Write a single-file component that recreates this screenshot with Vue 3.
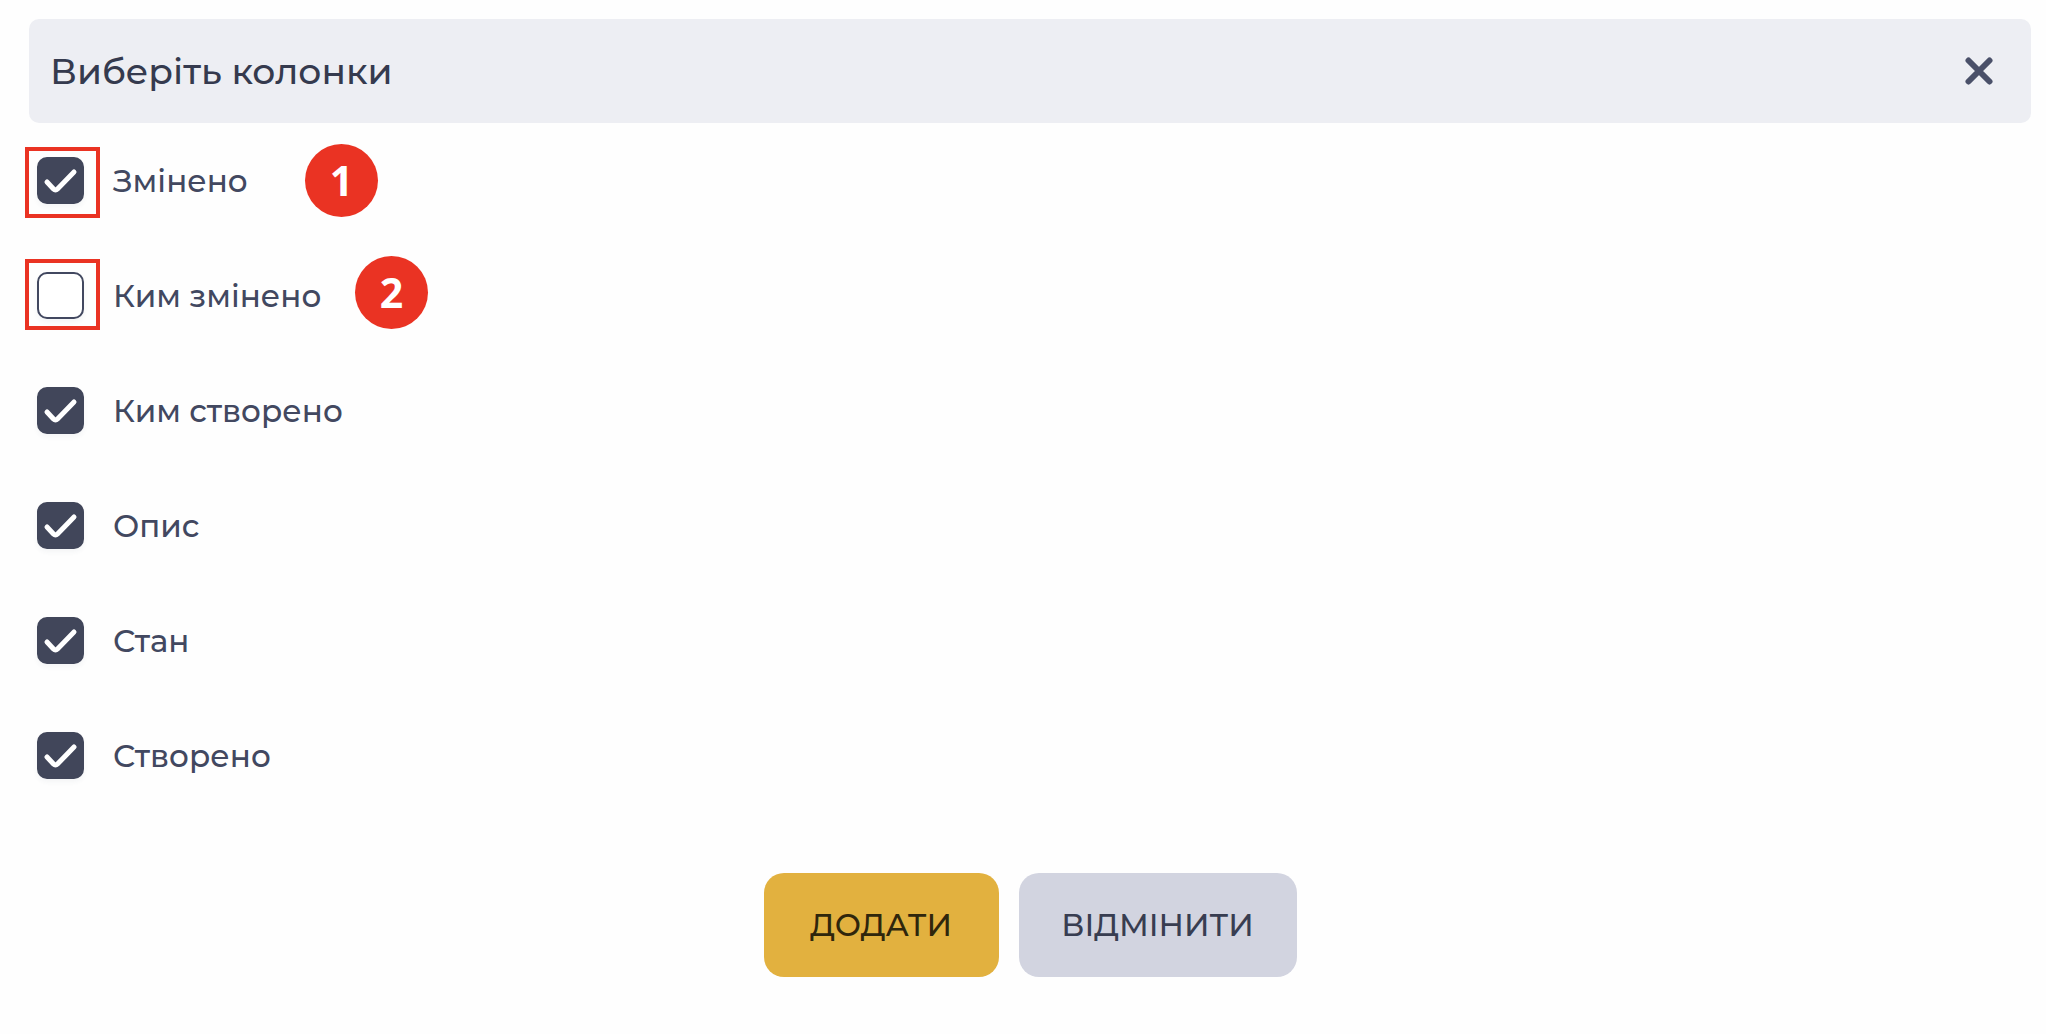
<script setup>
import { ref } from 'vue'

const columns = ref([
  { id: 'changed', label: 'Змінено', checked: true, mark: 1 },
  { id: 'changed-by', label: 'Ким змінено', checked: false, mark: 2 },
  { id: 'created-by', label: 'Ким створено', checked: true },
  { id: 'description', label: 'Опис', checked: true },
  { id: 'state', label: 'Стан', checked: true },
  { id: 'created', label: 'Створено', checked: true },
])
</script>

<template>
  <main class="dialog">
    <header class="header">
      <h1 class="title">Виберіть колонки</h1>
      <button class="close" type="button" aria-label="Закрити">
        <svg viewBox="0 0 28 28" aria-hidden="true">
          <path d="M3.500 3.500 24.500 24.500M24.500 3.500 3.500 24.500" />
        </svg>
      </button>
    </header>

    <ul class="list">
      <li v-for="column in columns" :key="column.id" class="row">
        <span class="control">
          <input :id="column.id" v-model="column.checked" class="box" type="checkbox" />
          <svg v-if="column.checked" class="tick" viewBox="0 0 47 47" aria-hidden="true">
            <path d="M10 25 16.500 32Q18.500 34 20.500 32L37 15" />
          </svg>
          <span v-if="column.mark" class="frame" :class="'frame-' + column.mark"></span>
        </span>
        <label class="label" :for="column.id">{{ column.label }}</label>
        <span v-if="column.mark" class="badge" :class="'badge-' + column.mark">{{ column.mark }}</span>
      </li>
    </ul>

    <footer class="actions">
      <button class="button primary" type="button">ДОДАТИ</button>
      <button class="button secondary" type="button">ВІДМІНИТИ</button>
    </footer>
  </main>
</template>

<style>
body {
  margin: 0;
  background: #fefefe;
}
</style>

<style scoped>
.dialog {
  padding: 19px 15px 56px 29px;
  font-family: Montserrat, Inter, sans-serif;
  font-weight: 500;
  color: #424860;
}

.header {
  display: flex;
  align-items: center;
  justify-content: space-between;
  height: 104px;
  padding: 0 38px 0 21px;
  border-radius: 10px;
  background: #edeef3;
}

.title {
  margin: 0;
  font-size: 36px;
  font-weight: 500;
  line-height: 48px;
  color: #353a4e;
}

.close {
  display: flex;
  padding: 0;
  border: 0;
  background: none;
}

.close svg {
  width: 28px;
  height: 28px;
  fill: none;
  stroke: #4a5069;
  stroke-width: 6;
  stroke-linecap: round;
}

.list {
  margin: 0;
  padding: 0 8px;
  list-style: none;
}

.row {
  position: relative;
  display: flex;
  align-items: center;
  gap: 29px;
  height: 115px;
}

.control {
  position: relative;
  display: flex;
}

.box {
  appearance: none;
  width: 47px;
  height: 47px;
  margin: 0;
  border: 2px solid #424860;
  border-radius: 10px;
  background: #fff;
  box-shadow: 0 3px 5px rgba(66, 72, 96, 0.05);
}

.box:checked {
  border-color: #41465a;
  background: #41465a;
}

.tick {
  position: absolute;
  inset: 0;
  fill: none;
  stroke: #fff;
  stroke-width: 5;
  stroke-linecap: round;
  stroke-linejoin: round;
  pointer-events: none;
}

.frame {
  position: absolute;
  left: -12px;
  box-sizing: border-box;
  width: 75px;
  height: 71px;
  border: 4px solid #ea3323;
  pointer-events: none;
}

.frame-1 {
  top: -10px;
}

.frame-2 {
  top: -13px;
}

.label {
  font-size: 31px;
  line-height: 40px;
}

.badge {
  position: absolute;
  width: 73px;
  height: 73px;
  border-radius: 50%;
  background: #ea3323;
  color: #fff;
  font-family: "Noto Sans", "Open Sans", sans-serif;
  font-size: 41px;
  font-weight: 700;
  line-height: 73px;
  text-align: center;
}

.badge-1 {
  top: 21px;
  left: 268px;
}

.badge-2 {
  top: 18px;
  left: 318px;
}

.actions {
  display: flex;
  justify-content: center;
  gap: 20px;
  padding-top: 60px;
}

.button {
  height: 104px;
  padding: 0 40px;
  border: 0;
  border-radius: 20px;
  font: inherit;
  font-size: 31px;
}

.primary {
  min-width: 235px;
  background: #e2b13f;
  color: #2f260c;
}

.secondary {
  min-width: 278px;
  background: #d2d4e0;
  color: #383d51;
}
</style>
